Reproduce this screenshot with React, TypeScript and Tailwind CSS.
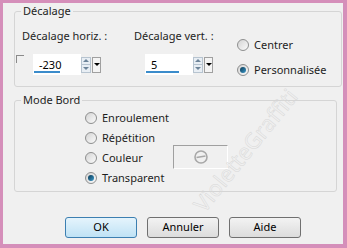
import React from "react"

const font = { fontFamily: '"Segoe UI", "Noto Sans", "Open Sans", sans-serif' }

const Radio = ({label,checked}:{label:string,checked?:boolean}) => (
  <div className="flex items-center h-[20px]">
    <div className="w-[12px] h-[12px] rounded-full border border-[#8e8f8f] bg-gradient-to-br from-[#d4d4d4] to-[#fbfbfb] flex items-center justify-center">
      {checked && <div className="w-[6px] h-[6px] rounded-full bg-gradient-to-br from-[#0a3a55] to-[#3d9bcc]" />}
    </div>
    <span className="ml-[5px] text-[11px] text-[#1e1e1e]">{label}</span>
  </div>
)

const Spin = ({value,underline}:{value:string,underline:number}) => (
  <div className="flex items-center">
    <div className="relative w-[48px] h-[21px] bg-white">
      <span className="absolute left-[6px] top-[3px] text-[11px] text-black">{value}</span>
      <div className="absolute left-[1px] bottom-[2px] h-[2px] bg-[#3b8ccb]" style={{width:underline}} />
    </div>
    <div className="flex flex-col w-[10px] h-[16px] border border-[#b7c4d0] bg-[#e8eef4]">
      <div className="flex-1 flex items-center justify-center border-b border-[#b7c4d0]">
        <div className="w-0 h-0 border-l-[3px] border-r-[3px] border-b-[3px] border-l-transparent border-r-transparent border-b-[#6d8499]" />
      </div>
      <div className="flex-1 flex items-center justify-center">
        <div className="w-0 h-0 border-l-[3px] border-r-[3px] border-t-[3px] border-l-transparent border-r-transparent border-t-[#6d8499]" />
      </div>
    </div>
    <div className="w-[9px] h-[16px] ml-[1px] border border-[#a0a0a0] bg-[#f4f4f4] flex items-center justify-center">
      <div className="w-0 h-0 border-l-[3px] border-r-[3px] border-t-[3px] border-l-transparent border-r-transparent border-t-black" />
    </div>
  </div>
)

const Btn = ({label,primary}:{label:string,primary?:boolean}) => (
  <button className={`w-[72px] h-[21px] rounded-[3px] border text-[11px] text-black flex items-center justify-center ${primary ? "border-[#3c7fb1] bg-gradient-to-b from-[#e5f4fc] to-[#bfe2f5]" : "border-[#707070] bg-gradient-to-b from-[#f3f3f3] to-[#dcdcdc]"}`}>
    {label}
  </button>
)

export default function App() {
  return <div className="w-[347px] h-[248px] bg-[#d58fba] pl-[3px] pt-[3px] pr-[4px] pb-[4px]" style={font}>
    <div className="relative w-full h-full bg-[#f0f0f0] overflow-hidden">
      <fieldset className="ml-[11px] w-[328px] h-[84px] border border-[#d5d5d5] rounded-[3px] px-0">
        <legend className="ml-[6px] px-[2px] text-[11px] leading-[16px] text-[#1e1e1e]">Décalage</legend>
        <div className="flex">
          <div className="w-[115px] flex flex-col">
            <span className="pl-[7px] mt-[9px] text-[11px] leading-[16px] text-[#1e1e1e]">Décalage horiz. :</span>
            <div className="flex items-start mt-[10px]">
              <div className="w-[8px] h-[8px] ml-[1px] mt-[1px] border-t border-l border-[#8a8a8a]" />
              <div className="ml-[9px]"><Spin value="-230" underline={26} /></div>
            </div>
          </div>
          <div className="w-[104px] flex flex-col">
            <span className="pl-[4px] mt-[9px] text-[11px] leading-[16px] text-[#1e1e1e]">Décalage vert. :</span>
            <div className="pl-[15px] mt-[10px]"><Spin value="5" underline={33} /></div>
          </div>
          <div className="flex flex-col mt-[16px] ml-[3px] gap-[5px]">
            <Radio label="Centrer" />
            <Radio label="Personnalisée" checked />
          </div>
        </div>
      </fieldset>
      <fieldset className="ml-[11px] mt-[5px] w-[323px] h-[100px] border border-[#d5d5d5] rounded-[3px] px-0">
        <legend className="ml-[6px] px-[2px] text-[11px] leading-[16px] text-[#1e1e1e]">Mode Bord</legend>
        <div className="flex pl-[70px]">
          <div className="w-[88px] flex flex-col">
            <Radio label="Enroulement" />
            <Radio label="Répétition" />
            <Radio label="Couleur" />
            <Radio label="Transparent" checked />
          </div>
          <div className="mt-[37px] w-[55px] h-[24px] border-t border-l border-[#a0a0a0] border-r border-b border-r-white border-b-white flex items-center justify-center">
            <svg width="16" height="16" viewBox="0 0 16 16">
              <circle cx="8" cy="8" r="6" fill="none" stroke="#a8a8a8" strokeWidth="1.6" />
              <line x1="3.5" y1="8.5" x2="12.5" y2="7" stroke="#a8a8a8" strokeWidth="1.6" />
            </svg>
          </div>
        </div>
      </fieldset>
      <div className="flex gap-[10px] ml-[62px] mt-[25px]">
        <Btn label="OK" primary />
        <Btn label="Annuler" />
        <Btn label="Aide" />
      </div>
      <div className="absolute left-[242px] top-[147px] text-[22px] text-transparent whitespace-nowrap pointer-events-none select-none"
        style={{WebkitTextStroke:"0.5px #d8d8d8",transform:"translate(-50%,-50%) rotate(-51deg)"}}>
        VioletteGraffiti
      </div>
    </div>
  </div>
}
